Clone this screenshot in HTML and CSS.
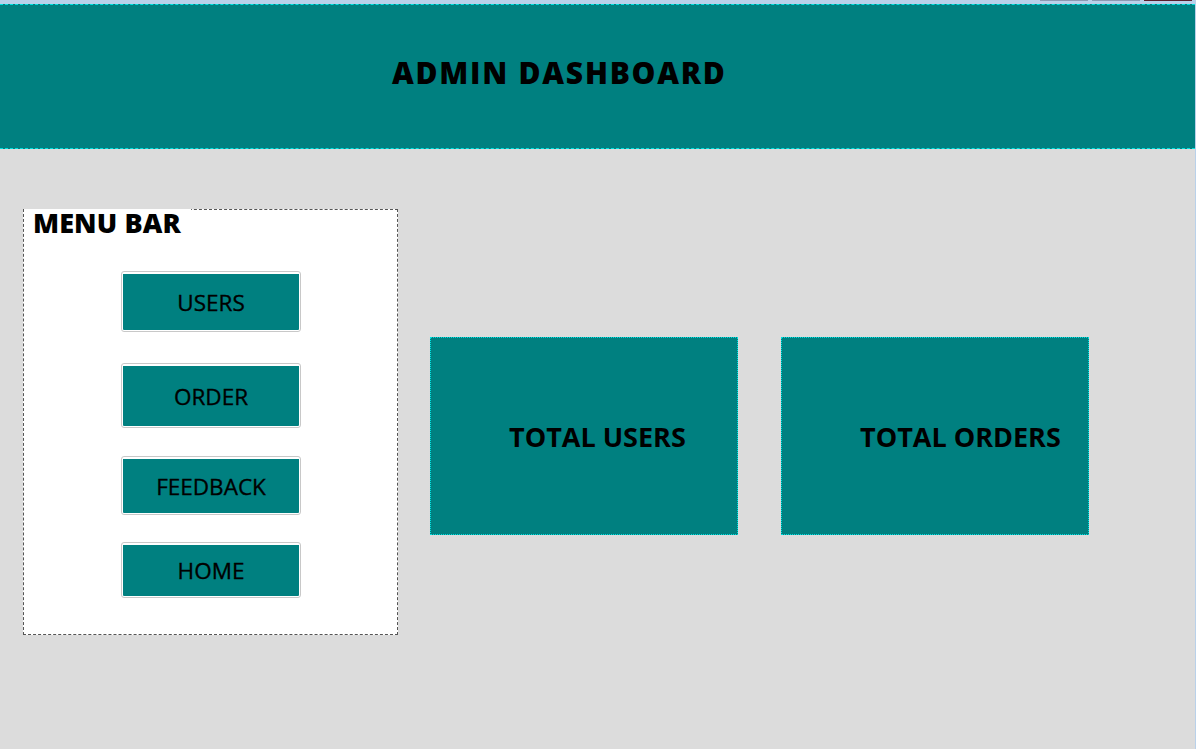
FILE: index.html
```html
<!DOCTYPE html>
<html lang="en">
<head>
<meta charset="utf-8">
<title>Admin Dashboard</title>
<link rel="stylesheet" href="styles.css">
</head>
<body>
<div class="window">
  <div class="frame">
    <span class="wbtn wbtn-min"></span>
    <span class="wbtn wbtn-max"></span>
    <span class="wbtn wbtn-close"></span>
  </div>
  <header class="header">
    <h1 class="title">ADMIN DASHBOARD</h1>
  </header>
  <main class="main">
    <section class="menu">
      <div class="menu-label">MENU BAR</div>
      <nav class="menu-list">
        <button class="menu-btn btn-users">USERS</button>
        <button class="menu-btn btn-order">ORDER</button>
        <button class="menu-btn btn-feedback">FEEDBACK</button>
        <button class="menu-btn btn-home">HOME</button>
      </nav>
    </section>
    <section class="cards">
      <div class="card">TOTAL USERS</div>
      <div class="card">TOTAL ORDERS</div>
    </section>
  </main>
</div>
</body>
</html>
```

FILE: styles.css
```css
html, body {
  margin: 0;
  padding: 0;
}

body {
  background: #dcdcdc;
  font-family: "Open Sans", "Noto Sans", sans-serif;
  color: #000;
}

.window {
  width: 1195px;
  height: 749px;
  border-right: 1px solid #b9d1ea;
  background: #dcdcdc;
  overflow: hidden;
}

.frame {
  height: 4px;
  background: #b9d1ea;
  display: flex;
  justify-content: flex-end;
  align-items: flex-start;
  gap: 4px;
  padding-right: 3px;
}

.wbtn {
  width: 48px;
  height: 1px;
  background: #8a9ab4;
}

.wbtn-close {
  background: #5a1e2c;
}

.header {
  height: 143px;
  background: #008080;
  border-top: 1px dashed #00e0e0;
  border-bottom: 1px dashed #00e0e0;
  display: flex;
  align-items: center;
  padding-left: 392px;
  box-sizing: content-box;
}

.title {
  margin: 0 0 8px 0;
  font-size: 30px;
  font-weight: 800;
  letter-spacing: 1.75px;
  line-height: 1;
}

.main {
  display: flex;
  align-items: flex-start;
  padding: 60px 0 0 23px;
}

.menu {
  width: 373px;
  height: 424px;
  background: #fff;
  border: 1px dashed #555;
}

.menu-label {
  width: 158px;
  margin-top: -1px;
  padding: 0 0 0 9px;
  height: 28px;
  background: #fff;
  font-size: 27px;
  font-weight: 800;
  line-height: 28px;
  letter-spacing: 0.1px;
}

.menu-list {
  display: flex;
  flex-direction: column;
  align-items: center;
  padding-top: 34px;
  padding-left: 1px;
}

.menu-btn {
  width: 180px;
  padding: 2px 1px 1px 1px;
  border: 1px solid #c8c8c8;
  border-radius: 3px;
  background: #008080;
  background-clip: content-box;
  font-family: "Open Sans", "Noto Sans", sans-serif;
  font-size: 22.5px;
  font-weight: 400;
  -webkit-text-stroke: 0.35px #000;
  color: #000;
  cursor: pointer;
}

.btn-users { height: 61px; }
.btn-order { height: 65px; margin-top: 31px; }
.btn-feedback { height: 59px; margin-top: 28px; }
.btn-home { height: 56px; margin-top: 27px; }

.cards {
  display: flex;
  gap: 43px;
  margin: 128px 0 0 32px;
}

.card {
  width: 308px;
  height: 198px;
  box-sizing: border-box;
  background: #008080;
  border: 1px dotted #00e0e0;
  display: flex;
  align-items: center;
  padding-left: 78px;
  font-size: 27px;
  font-weight: 700;
}
```
